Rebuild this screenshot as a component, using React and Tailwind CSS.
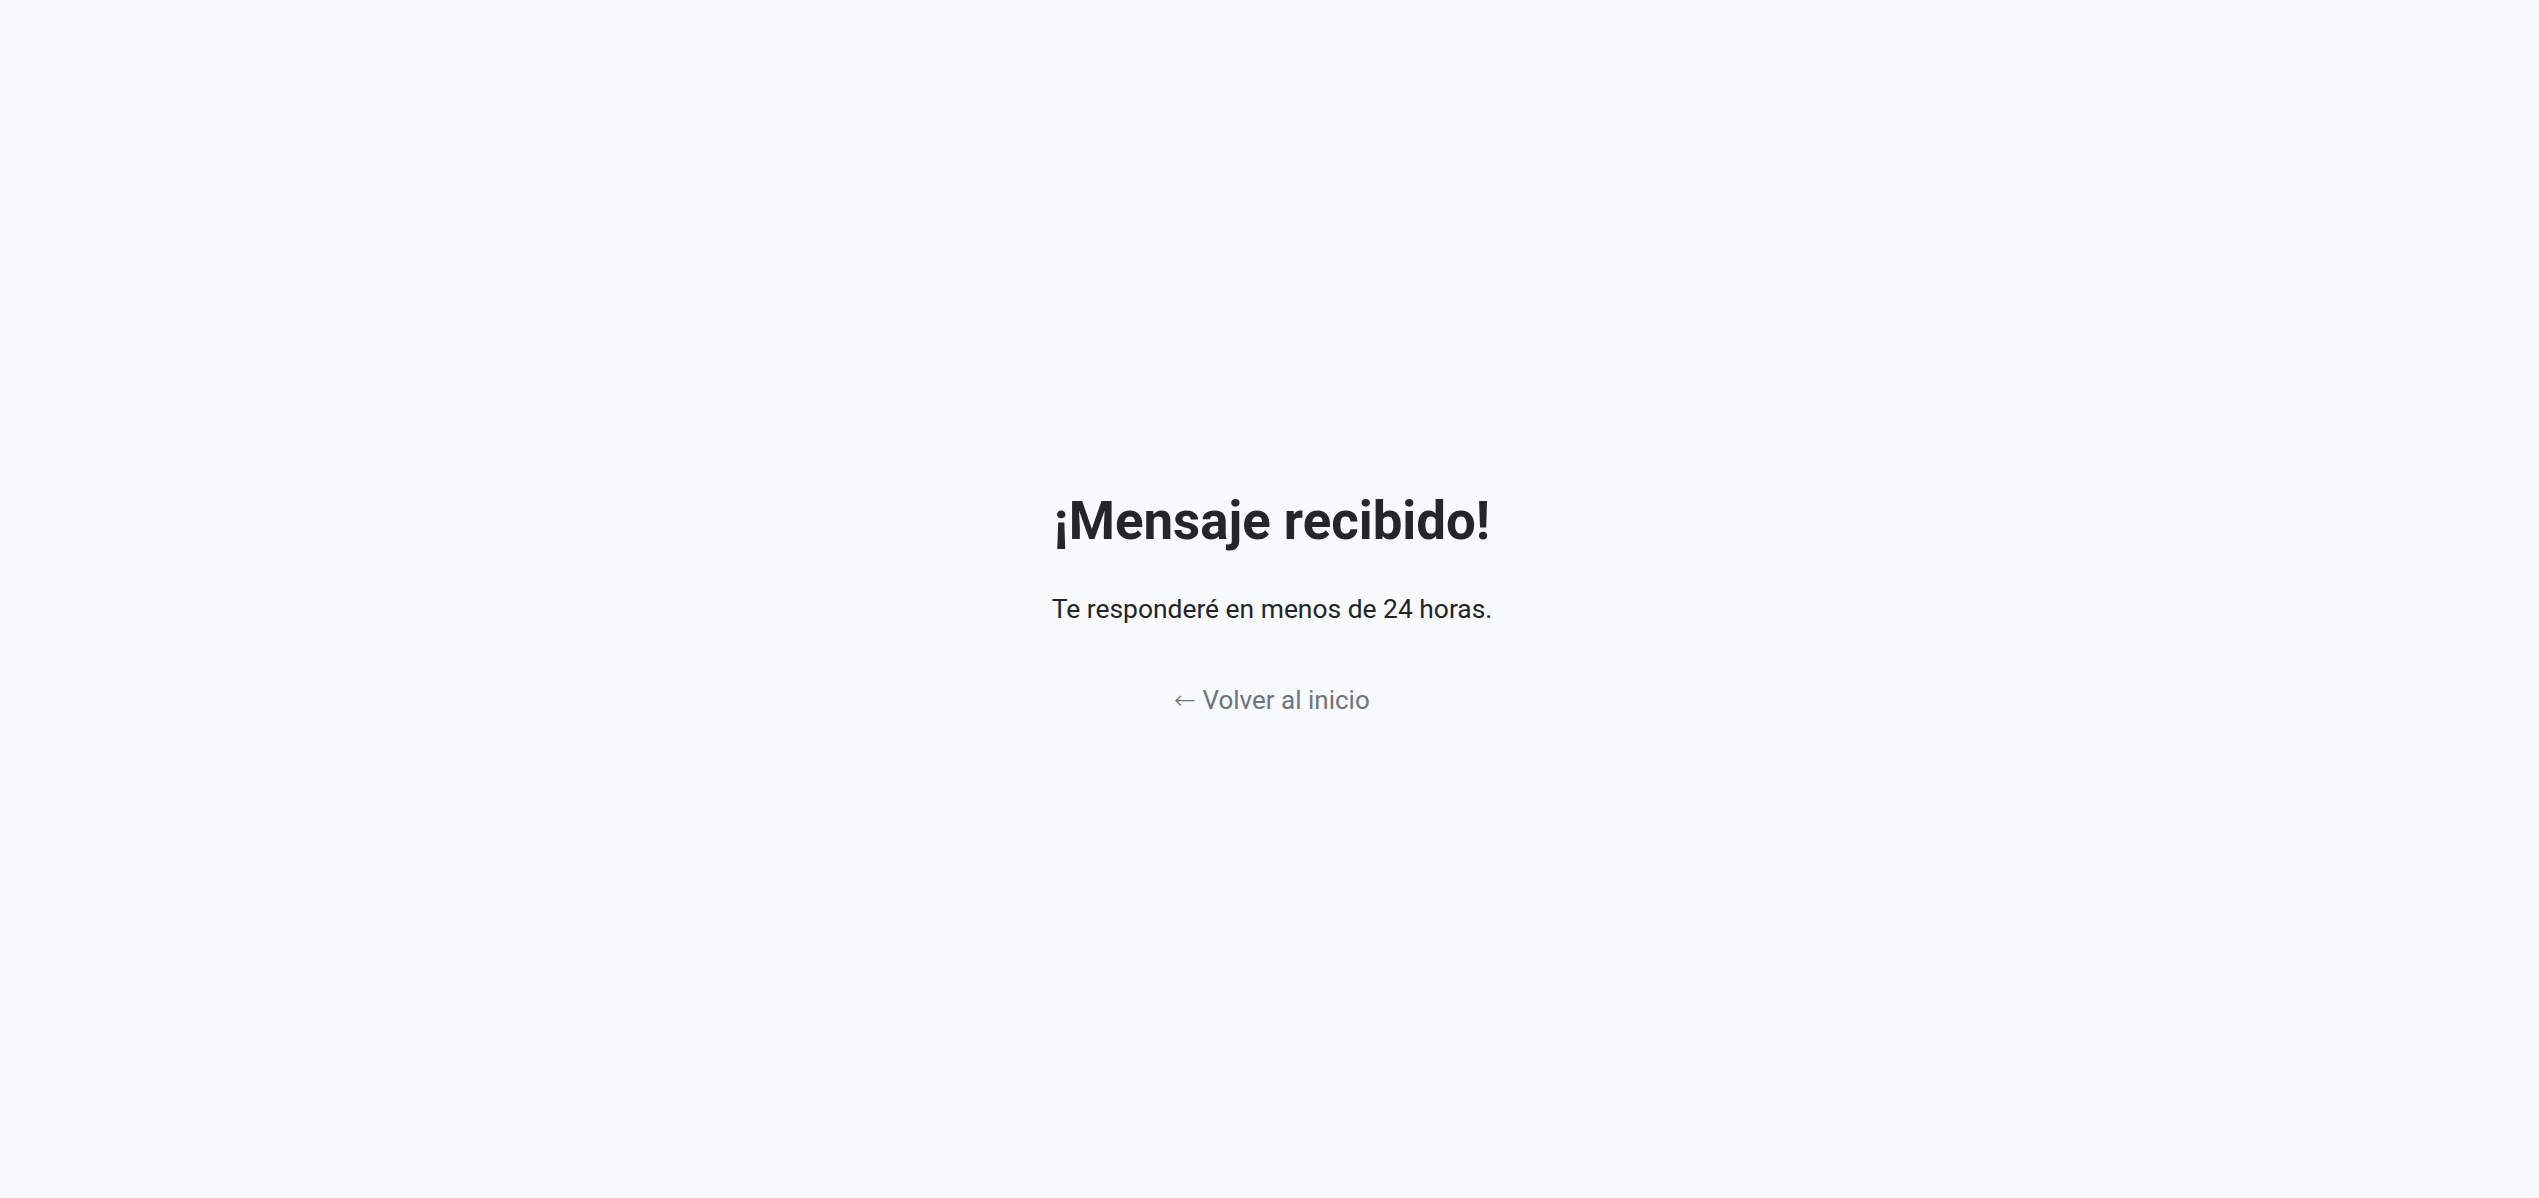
import React from 'react';

const App = () => {
    return (
        <div className="min-h-screen w-full bg-[#f8f9fa] flex items-center justify-center font-['Roboto',sans-serif]">
            <div className="flex flex-col items-center text-center pt-[12px] pl-[5px]">
                <h1 className="text-[52.8px] leading-[1.2] font-bold text-[#24272a]">¡Mensaje recibido!</h1>
                <p className="mt-[37px] text-[26.4px] leading-[1.5] text-[#212529]">Te responderé en menos de 24 horas.</p>
                <a href="#" className="mt-[51px] text-[26px] leading-[1.5] text-[#6c757d]">
                    <span className="font-['DejaVu_Sans',sans-serif] font-extralight">←</span> Volver al inicio
                </a>
            </div>
        </div>
    );
};

export default App;
